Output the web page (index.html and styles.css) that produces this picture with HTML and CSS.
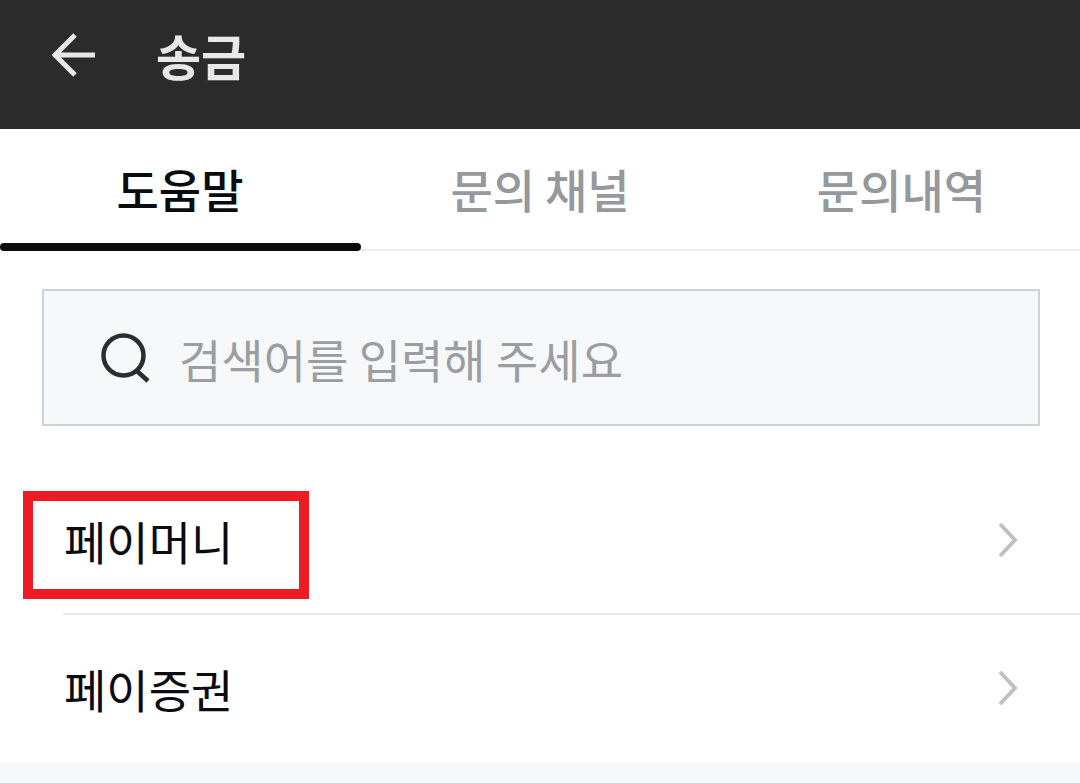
FILE: index.html
```html
<!DOCTYPE html>
<html lang="ko">
<head>
<meta charset="utf-8">
<title>송금</title>
<link rel="stylesheet" href="styles.css">
</head>
<body>
<div class="page">
  <header class="topbar">
    <svg class="back" viewBox="0 0 44 44" width="44" height="44"><path d="M23 2 L3 22 L23 42 M3 22 H43" fill="none" stroke="#e8e8e8" stroke-width="5"/></svg>
    <h1 class="title">송금</h1>
  </header>
  <nav class="tabs">
    <div class="tab active">도움말</div>
    <div class="tab">문의 채널</div>
    <div class="tab">문의내역</div>
  </nav>
  <section class="searchwrap">
    <div class="search">
      <svg class="mag" viewBox="0 0 50 50" width="50" height="50"><circle cx="22.500" cy="22.500" r="20" fill="none" stroke="#2b2d30" stroke-width="4.500"/><path d="M36 38 L47 48" stroke="#2b2d30" stroke-width="4.500" fill="none"/></svg>
      <span class="placeholder">검색어를 입력해 주세요</span>
    </div>
  </section>
  <ul class="list">
    <li class="row"><span>페이머니</span><svg class="chev" viewBox="0 0 22 36" width="22" height="36"><path d="M3 2 L18 18 L3 34" fill="none" stroke="#bcc1c7" stroke-width="4"/></svg></li>
    <li class="row"><span>페이증권</span><svg class="chev" viewBox="0 0 22 36" width="22" height="36"><path d="M3 2 L18 18 L3 34" fill="none" stroke="#bcc1c7" stroke-width="4"/></svg></li>
  </ul>
  <div class="footer"></div>
  <div class="highlight"></div>
</div>
</body>
</html>
```
FILE: styles.css
```css
* { box-sizing: border-box; }
html, body { margin: 0; padding: 0; background: #fff; }
.page {
  position: relative;
  width: 1080px;
  height: 783px;
  overflow: hidden;
  display: flex;
  flex-direction: column;
  font-family: "Noto Sans CJK KR", "Noto Sans", sans-serif;
}
.topbar {
  height: 129px;
  background: #2b2b2b;
  display: flex;
  align-items: center;
  padding: 0 0 19px 52px;
  gap: 60px;
  flex: none;
}
.back { flex: none; }
.title {
  margin: 0;
  font-size: 49px;
  font-weight: 700;
  color: #e8e8e8;
  line-height: 60px;
}
.tabs {
  height: 122px;
  display: grid;
  grid-template-columns: repeat(3, 1fr);
  border-bottom: 2px solid #ececec;
  flex: none;
}
.tab {
  display: flex;
  align-items: center;
  justify-content: center;
  padding-bottom: 2px;
  font-size: 46px;
  font-weight: 500;
  word-spacing: -3px;
  color: #96999c;
  position: relative;
}
.tab:last-child { padding-left: 3px; }
.tab.active { color: #0a0c10; }
.tab.active::after {
  content: "";
  position: absolute;
  left: 0;
  right: -1px;
  bottom: -2px;
  height: 8px;
  border-radius: 4px;
  background: #0a0c10;
}
.searchwrap { padding: 38px 40px 41px 42px; flex: none; }
.search {
  height: 137px;
  background: #f7f8fa;
  border: 2px solid #cfd3d7;
  display: flex;
  align-items: center;
  gap: 28px;
  padding: 0 0 0 57px;
}
.mag { flex: none; }
.placeholder { font-size: 46px; word-spacing: -2.500px; color: #9a9da1; line-height: 60px; }
.list { list-style: none; margin: 0; padding: 0 0 0 63px; flex: none; }
.row {
  height: 148px;
  display: flex;
  align-items: center;
  justify-content: space-between;
  padding: 0 61px 0 1px;
  font-size: 46px;
  color: #0a0c10;
}
.row:first-child { border-bottom: 2px solid #e9e9e9; }
.row:last-child { padding-bottom: 3px; }
.chev { flex: none; }
.footer { flex: 1; background: #f7f8fa; }
.highlight {
  position: absolute;
  left: 23px;
  top: 491px;
  width: 286px;
  height: 108px;
  border: 10px solid #ed1c24;
}
```
